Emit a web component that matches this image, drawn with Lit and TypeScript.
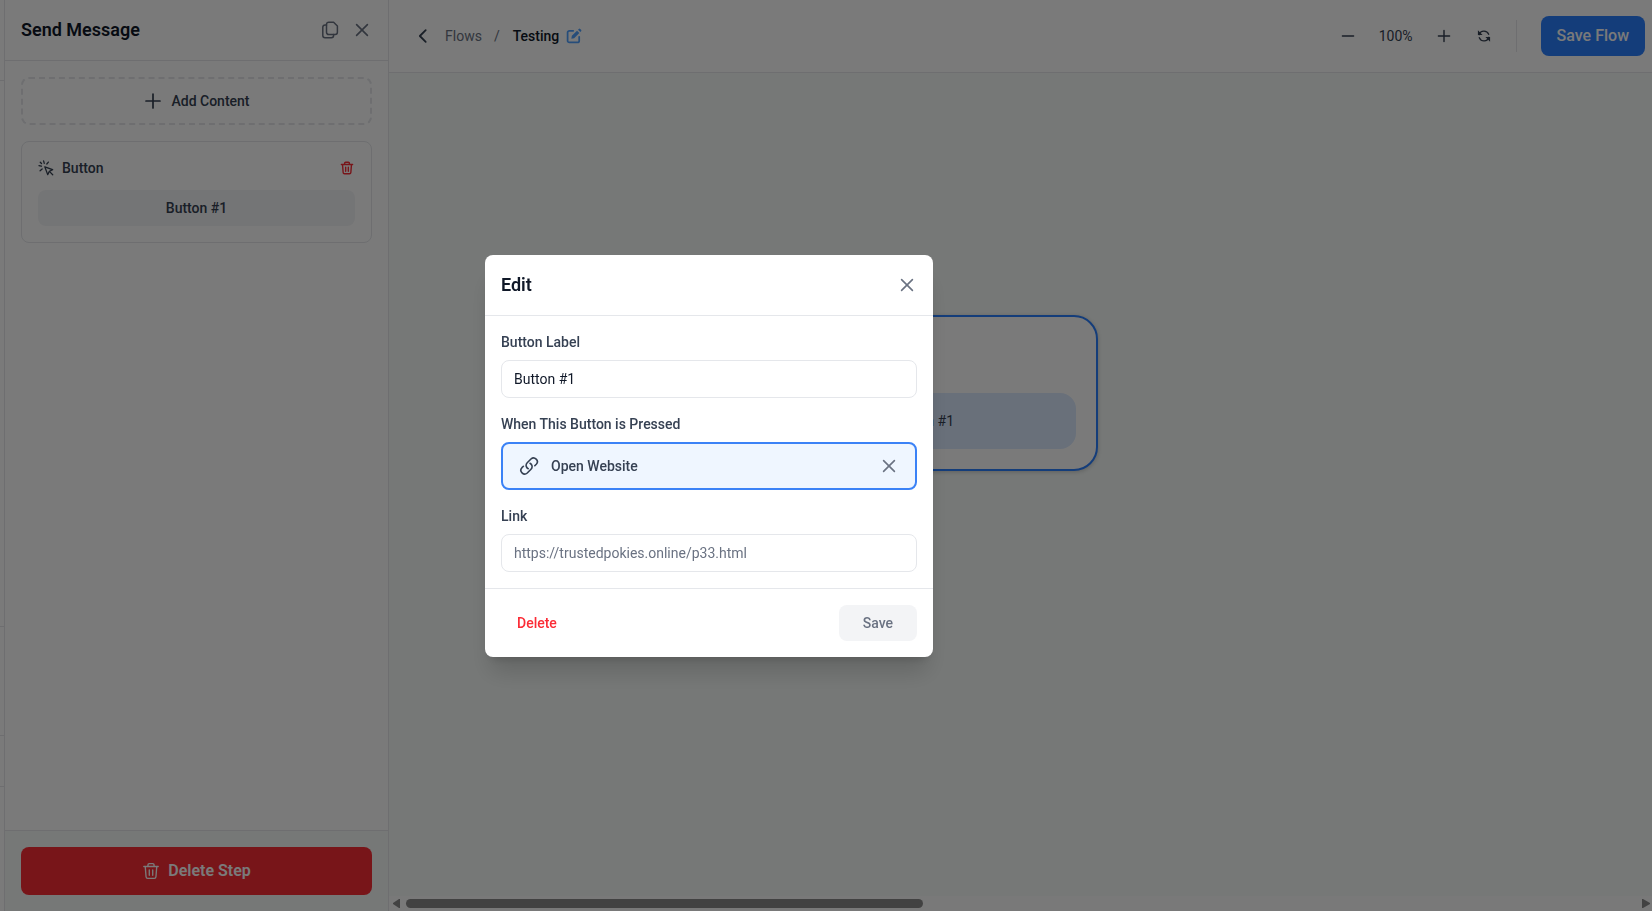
import { LitElement, html, svg, css } from "lit";
import { customElement, property, state } from "lit/decorators.js";

const glyphs: Record<string, unknown> = {
  close: svg`<path d="M4 4l12 12M16 4L4 16" />`,
  plus: svg`<path d="M10 3v14M3 10h14" />`,
  minus: svg`<path d="M3 10h14" />`,
  back: svg`<path d="M13 3.5L6.5 10l6.5 6.5" />`,
  copy: svg`<path d="M8.7 2.2h4.9l3.800 3.800v6.300a2.200 2.200 0 0 1-2.200 2.200H8.700a2.200 2.200 0 0 1-2.200-2.200V4.400a2.200 2.200 0 0 1 2.200-2.200z" />
    <path d="M6.500 5H5a2.200 2.200 0 0 0-2.200 2.200v8.400A2.200 2.200 0 0 0 5 17.800h6.400a2.200 2.200 0 0 0 2.200-2.200v-1.100" />`,
  trash: svg`<path d="M2 5h16M6.6 5V3.2A1.4 1.4 0 0 1 8 1.8h4a1.4 1.4 0 0 1 1.4 1.4V5M3.6 5l.9 11.4a1.9 1.9 0 0 0 1.9 1.8h7.2a1.9 1.9 0 0 0 1.9-1.8L16.4 5M8.1 8.7v6M11.9 8.7v6" />`,
  click: svg`<path d="M8.5 8.5l9.8 3.6-4.1 2.1-2.1 4.1z" /><path d="M14.8 14.8l3.6 3.6M7 1.2l.8 3M1.2 7l3 .8M13 2.6l-2 2.4M2.6 13.4l2.6-2.2M2.8 2.8l1.6 1.6" />`,
  link: svg`<path d="M11 7.240a3.750 3.750 0 0 1 1 6l-3.750 3.750a3.750 3.750 0 0 1-5.300-5.300l1.460-1.460M15.800 9.760l1.460-1.460a3.750 3.750 0 0 0-5.300-5.300L8.200 6.750a3.750 3.750 0 0 0 1 6" />`,
  edit: svg`<path d="M9 3.500H4.200A2.200 2.200 0 0 0 2 5.700v10.100A2.200 2.200 0 0 0 4.200 18h10.100a2.200 2.200 0 0 0 2.200-2.200V11" /><path d="M7.300 9.800l6.500-6.500 2.900 2.900-6.500 6.500-3.500.6zM15 2.100l1-1a1.200 1.200 0 0 1 1.700 0l1.200 1.200a1.200 1.200 0 0 1 0 1.700l-1 1z" fill="currentColor" stroke="none" />`,
  refresh: svg`<path d="M3 8.200A7.300 7.300 0 0 1 16.700 7.600M17 11.800A7.300 7.300 0 0 1 3.300 12.400" /><path d="M1.300 1.800v6.700H8zM18.700 18.200v-6.700H12z" fill="currentColor" stroke="none" />`,
};

@customElement("ui-icon")
export class UiIcon extends LitElement {
  @property() name = "";
  @property({ type: Number }) size = 16;
  @property({ type: Number }) weight = 2;

  static styles = css`
    :host { display: inline-flex; flex: none; }
    svg { display: block; fill: none; stroke: currentColor; stroke-linecap: round; stroke-linejoin: round; }
  `;

  render() {
    return html`<svg width=${this.size} height=${this.size} viewBox="0 0 20 20" stroke-width=${this.weight} aria-hidden="true">${glyphs[this.name]}</svg>`;
  }
}

const base = css`
  * { box-sizing: border-box; }
  button, input { font: inherit; color: inherit; margin: 0; }
  button { display: inline-flex; align-items: center; justify-content: center; padding: 0; border: 0; background: none; cursor: pointer; }
  h2 { margin: 0; font-size: 18px; line-height: 28px; font-weight: 600; color: #101828; }
  .icon-button { width: 32px; height: 32px; color: #6a7282; }
`;

@customElement("step-panel")
export class StepPanel extends LitElement {
  static styles = [base, css`
    :host { display: flex; flex-direction: column; background: #fff; border: solid #e5e7eb; border-width: 0 1px; }
    header { display: flex; align-items: center; justify-content: space-between; height: 61px; padding: 0 10px 0 16px; border-bottom: 1px solid #e5e7eb; }
    .tools { display: flex; }
    .content { flex: 1; display: flex; flex-direction: column; gap: 16px; padding: 16px; }
    .add { gap: 8px; height: 48px; border: 2px dashed #e5e7eb; border-radius: 8px; font-weight: 500; color: #364153; }
    .card { display: flex; flex-direction: column; gap: 12px; padding: 16px; border: 1px solid #e5e7eb; border-radius: 8px; color: #364153; font-weight: 500; }
    .card-head { display: flex; align-items: center; gap: 8px; height: 20px; }
    .remove { margin-left: auto; width: 16px; height: 16px; color: #fb2c36; }
    .item { height: 36px; border-radius: 8px; background: #f3f4f6; font-weight: 500; }
    footer { display: flex; padding: 16px; border-top: 1px solid #e5e7eb; background: #f6faf8; }
    .delete { flex: 1; gap: 8px; height: 48px; border-radius: 8px; background: #fb2c36; color: #fff; font-size: 16px; font-weight: 600; }
  `];

  render() {
    return html`
      <header>
        <h2>Send Message</h2>
        <div class="tools">
          <button class="icon-button" aria-label="Duplicate step"><ui-icon name="copy" size="20" weight="1.5"></ui-icon></button>
          <button class="icon-button" aria-label="Close panel"><ui-icon name="close" size="18" weight="1.800"></ui-icon></button>
        </div>
      </header>
      <div class="content">
        <button class="add"><ui-icon name="plus" size="20" weight="1.7"></ui-icon>Add Content</button>
        <section class="card">
          <div class="card-head">
            <ui-icon name="click" size="16" weight="1.600"></ui-icon>Button
            <button class="remove" aria-label="Remove button"><ui-icon name="trash" size="14"></ui-icon></button>
          </div>
          <button class="item">Button #1</button>
        </section>
      </div>
      <footer><button class="delete"><ui-icon name="trash" size="18" weight="1.500"></ui-icon>Delete Step</button></footer>
    `;
  }
}

@customElement("flow-editor")
export class FlowEditor extends LitElement {
  static styles = [base, css`
    :host { display: flex; flex-direction: column; min-width: 0; background: #f6faf8; }
    header { display: flex; align-items: center; justify-content: space-between; height: 73px; padding: 0 7px 0 18px; background: #fff; border-bottom: 1px solid #e5e7eb; }
    nav, .zoom { display: flex; align-items: center; }
    nav { gap: 6px; color: #6a7282; }
    nav .back, .zoom .icon-button { color: #364153; }
    nav a { color: inherit; text-decoration: none; }
    .slash { padding: 0 7px 0 6px; }
    .name { color: #101828; font-weight: 500; }
    .rename { width: 18px; height: 18px; color: #51a2ff; }
    .zoom { gap: 8px; }
    .level { width: 48px; text-align: center; color: #364153; }
    .rule { width: 1px; height: 32px; margin: 0 16px 0 8px; background: #e5e7eb; }
    .save { height: 40px; padding: 0 16px; border-radius: 8px; background: #2b7fff; color: #fff; font-size: 16px; font-weight: 500; }
    .canvas { position: relative; flex: 1; overflow: hidden; }
    .node { position: absolute; left: 360px; top: 242px; width: 349px; display: flex; flex-direction: column; padding: 76px 20px 20px; border: 2px solid #2b7fff; border-radius: 24px; background: #fff; box-shadow: 0 1px 4px rgba(0, 0, 0, 0.2); }
    .node-button { height: 56px; border-radius: 16px; background: #dbeafe; color: #364153; font-weight: 400; }
    .scroll { display: flex; align-items: center; justify-content: space-between; height: 15px; padding: 0 2px 0 4px; gap: 6px; background: #fcfcfc; color: #8b8b8b; }
    .scroll svg { display: block; flex: none; fill: currentColor; }
    .track { flex: 1; }
    .thumb { width: 42%; height: 9px; border-radius: 5px; background: currentColor; }
  `];

  render() {
    return html`
      <header>
        <nav aria-label="Breadcrumb">
          <button class="icon-button back" aria-label="Back"><ui-icon name="back" size="18"></ui-icon></button>
          <a href="#flows">Flows</a><span class="slash">/</span><span class="name">Testing</span>
          <button class="rename" aria-label="Rename flow"><ui-icon name="edit" size="16" weight="2.200"></ui-icon></button>
        </nav>
        <div class="zoom">
          <button class="icon-button" aria-label="Zoom out"><ui-icon name="minus" size="16" weight="1.800"></ui-icon></button>
          <span class="level">100%</span>
          <button class="icon-button" aria-label="Zoom in"><ui-icon name="plus" size="16" weight="1.800"></ui-icon></button>
          <button class="icon-button" aria-label="Reset view"><ui-icon name="refresh" size="14" weight="1.800"></ui-icon></button>
          <span class="rule"></span>
          <button class="save">Save Flow</button>
        </div>
      </header>
      <div class="canvas">
        <article class="node"><button class="node-button">Button #1</button></article>
      </div>
      <div class="scroll">
        <svg width="7" height="9" viewBox="0 0 7 9"><path d="M7 0v9H6L0 5V4l6-4z" /></svg>
        <div class="track"><div class="thumb"></div></div>
        <svg width="8" height="9" viewBox="0 0 8 9"><path d="M0 0h1l7 4v1l-7 4H0z" /></svg>
      </div>
    `;
  }
}

@customElement("edit-dialog")
export class EditDialog extends LitElement {
  @state() private label = "Button #1";

  static styles = [base, css`
    :host { display: block; width: 448px; max-width: 100%; background: #fff; border-radius: 8px; box-shadow: 0 20px 25px -5px rgba(0, 0, 0, 0.15), 0 8px 10px -6px rgba(0, 0, 0, 0.15); }
    header { display: flex; align-items: center; justify-content: space-between; height: 61px; padding: 0 10px 0 16px; border-bottom: 1px solid #e5e7eb; }
    .body { display: flex; flex-direction: column; gap: 16px; padding: 16px; }
    .field { display: flex; flex-direction: column; gap: 8px; }
    .caption { font-weight: 500; color: #364153; }
    input { width: 100%; height: 38px; padding: 0 12px; border: 1px solid #e5e7eb; border-radius: 8px; background: #fff; color: #101828; outline: none; }
    input::placeholder { color: #6a7282; opacity: 1; }
    .action { display: flex; align-items: center; gap: 12px; height: 48px; padding: 0 10px 0 16px; border: 2px solid #3b82f6; border-radius: 8px; background: #eff6ff; color: #364153; font-weight: 500; }
    .clear { margin-left: auto; }
    footer { display: flex; justify-content: space-between; padding: 16px; border-top: 1px solid #e5e7eb; }
    footer button { height: 36px; border-radius: 8px; font-weight: 500; }
    .delete { padding: 0 16px; color: #fb2c36; }
    .save { padding: 0 24px; background: #f3f4f6; color: #6a7282; }
  `];

  render() {
    return html`
      <header>
        <h2>Edit</h2>
        <button class="icon-button" aria-label="Close"><ui-icon name="close" size="18" weight="1.800"></ui-icon></button>
      </header>
      <div class="body">
        <div class="field">
          <label class="caption" for="label">Button Label</label>
          <input id="label" type="text" .value=${this.label} @input=${(e: Event) => (this.label = (e.target as HTMLInputElement).value)} />
        </div>
        <div class="field">
          <span class="caption">When This Button is Pressed</span>
          <div class="action">
            <ui-icon name="link" size="20" weight="1.600"></ui-icon>Open Website
            <button class="icon-button clear" aria-label="Clear action"><ui-icon name="close" size="18" weight="1.800"></ui-icon></button>
          </div>
        </div>
        <div class="field">
          <label class="caption" for="link">Link</label>
          <input id="link" type="url" placeholder="https://trustedpokies.online/p33.html" />
        </div>
      </div>
      <footer>
        <button class="delete">Delete</button>
        <button class="save">Save</button>
      </footer>
    `;
  }
}

@customElement("app-root")
export class AppRoot extends LitElement {
  static styles = css`
    :host { display: grid; grid-template-columns: 4px 385px minmax(0, 1fr); height: 100vh; overflow: hidden; font: 14px/20px Roboto, sans-serif; color: #364153; }
    .rail { display: grid; grid-template-rows: 81px 1fr 109px 51px 124px; background: #fff; }
    .rail span { border-bottom: 1px solid #e5e7eb; }
    .rail span:last-child { border-bottom: 0; }
    .overlay { position: fixed; inset: 0; display: flex; align-items: center; justify-content: center; padding-right: 234px; background: rgba(0, 0, 0, 0.52); }
  `;

  render() {
    return html`
      <div class="rail"><span></span><span></span><span></span><span></span><span></span></div>
      <step-panel></step-panel>
      <flow-editor></flow-editor>
      <div class="overlay"><edit-dialog role="dialog" aria-modal="true" aria-label="Edit"></edit-dialog></div>
    `;
  }
}
